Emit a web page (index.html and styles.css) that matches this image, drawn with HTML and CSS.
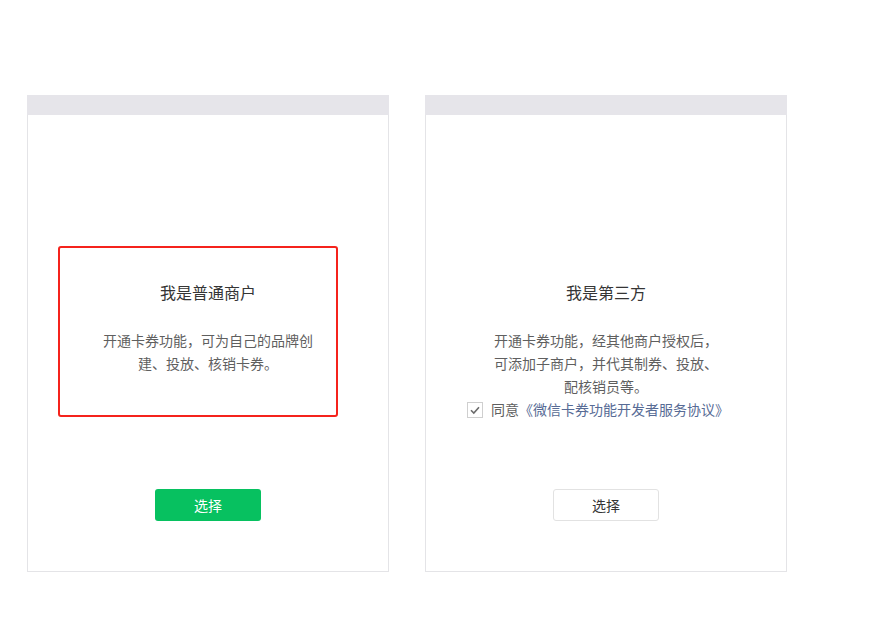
FILE: index.html
```html
<!DOCTYPE html>
<html lang="zh-CN">

<head>
    <meta charset="UTF-8">
    <meta name="viewport" content="width=device-width, initial-scale=1.0">
    <title>卡券功能 - 选择商户类型</title>
    <link rel="stylesheet" href="styles.css">
</head>

<body>
    <div class="types">
        <div class="card">
            <div class="card-hd"></div>
            <div class="card-bd">
                <h3>我是普通商户</h3>
                <p class="desc desc-normal">开通卡券功能，可为自己的品牌创建、投放、核销卡券。</p>
                <div class="ft">
                    <button class="btn btn-primary" type="button">选择</button>
                </div>
            </div>
            <div class="mark"></div>
        </div>
        <div class="card">
            <div class="card-hd"></div>
            <div class="card-bd">
                <h3>我是第三方</h3>
                <p class="desc desc-third">开通卡券功能，经其他商户授权后，可添加子商户，并代其制券、投放、配核销员等。</p>
                <label class="agree">
                    <span class="checkbox">
                        <svg width="12" height="12" viewBox="0 0 12 12">
                            <path d="M2 6.2 L4.8 9 L10 3.2" fill="none" stroke="#6b6b6b" stroke-width="1.6" />
                        </svg>
                    </span>
                    同意<a href="#">《微信卡券功能开发者服务协议》</a>
                </label>
                <div class="ft">
                    <button class="btn btn-default" type="button">选择</button>
                </div>
            </div>
        </div>
    </div>
</body>

</html>
```

FILE: styles.css
```css
body {
    margin: 0;
    font-family: "Noto Sans CJK SC", "Liberation Sans", sans-serif;
    font-size: 14px;
    color: #353535;
    background: #fff;
}

.types {
    display: flex;
    gap: 36px;
    padding: 95px 0 0 27px;
}

.card {
    position: relative;
    display: flex;
    flex-direction: column;
    width: 362px;
    height: 477px;
    box-sizing: border-box;
    border: 1px solid #e4e4e7;
    border-top: 0;

    .card-hd {
        height: 20px;
        margin: 0 -1px;
        background-color: #e6e5ea;
    }

    .card-bd {
        flex: 1;
        display: flex;
        flex-direction: column;
        align-items: center;
        padding-top: 165px;
        text-align: center;
    }

    & h3 {
        margin: 0;
        font-size: 16px;
        font-weight: normal;
        line-height: 24px;
        color: #353535;
    }

    .desc {
        margin: 25px 0 0;
        line-height: 23px;
        color: #5f5f5f;
    }

    .desc-normal {
        width: 216px;
    }

    .desc-third {
        width: 230px;
    }

    .ft {
        margin-top: auto;
        padding-bottom: 50px;
    }

    /* annotation frame over the first option */
    .mark {
        position: absolute;
        left: 30px;
        top: 151px;
        width: 276px;
        height: 167px;
        border: 2px solid #f5231c;
        border-radius: 3px;
    }
}

.agree {
    display: flex;
    align-items: center;
    margin-top: 0;
    margin-left: -16px;
    line-height: 23px;
    color: #5f5f5f;

    .checkbox {
        display: flex;
        align-items: center;
        justify-content: center;
        width: 14px;
        height: 14px;
        margin-right: 8px;
        border: 1px solid #cfcfcf;
        background: #fff;
    }

    & a {
        color: #576b95;
        text-decoration: none;
    }
}

.btn {
    width: 106px;
    height: 32px;
    border-radius: 3px;
    font-family: inherit;
    font-size: 14px;
    cursor: pointer;
}

.btn-primary {
    border: 0;
    background-color: #07c160;
    color: #fff;
}

.btn-default {
    border: 1px solid #e2e2e2;
    background-color: #fff;
    color: #353535;
}
```
